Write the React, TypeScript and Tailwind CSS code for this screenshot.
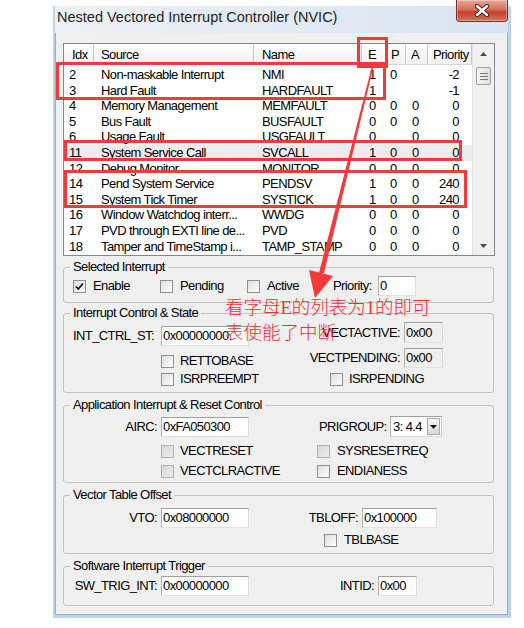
import React from "react";

type Row = [string, string, string, string, string, string, string];

const rows: Row[] = [
  ["2", "Non-maskable Interrupt", "NMI", "1", "0", "", "-2"],
  ["3", "Hard Fault", "HARDFAULT", "1", "", "", "-1"],
  ["4", "Memory Management", "MEMFAULT", "0", "0", "0", "0"],
  ["5", "Bus Fault", "BUSFAULT", "0", "0", "0", "0"],
  ["6", "Usage Fault", "USGFAULT", "0", "", "0", "0"],
  ["11", "System Service Call", "SVCALL", "1", "0", "0", "0"],
  ["12", "Debug Monitor", "MONITOR", "0", "0", "0", "0"],
  ["14", "Pend System Service", "PENDSV", "1", "0", "0", "240"],
  ["15", "System Tick Timer", "SYSTICK", "1", "0", "0", "240"],
  ["16", "Window Watchdog interr...", "WWDG", "0", "0", "0", "0"],
  ["17", "PVD through EXTI line de...", "PVD", "0", "0", "0", "0"],
  ["18", "Tamper and TimeStamp i...", "TAMP_STAMP", "0", "0", "0", "0"],
];

function Box({ checked, disabled }: { checked?: boolean; disabled?: boolean }) {
  return (
    <span
      className={
        disabled
          ? "flex h-[13px] w-[13px] shrink-0 items-center justify-center border border-[#b1b1b1] bg-[linear-gradient(135deg,#d9d9d9,#ebebeb)]"
          : "flex h-[13px] w-[13px] shrink-0 items-center justify-center border border-[#8e8f8f] bg-[linear-gradient(135deg,#dedede,#ffffff)]"
      }
    >
      {checked && (
        <svg width="11" height="11" viewBox="0 0 11 11">
          <path d="M2 5.5 L4.3 8 L9 2.5" fill="none" stroke="#111" strokeWidth="1.8" />
        </svg>
      )}
    </span>
  );
}

function Field({ value, cls, gray }: { value: string; cls: string; gray?: boolean }) {
  return (
    <div
      className={
        (gray
          ? "flex items-center border border-t-[#a0a0a0] border-l-[#b0b0b0] border-r-[#dcdcdc] border-b-[#e2e2e2] bg-[#f0f0f0] pl-[1px] "
          : "flex items-center border border-t-[#a0a0a0] border-l-[#b0b0b0] border-r-[#dcdcdc] border-b-[#e2e2e2] bg-white pl-[1px] ") + cls
      }
    >
      {value}
    </div>
  );
}

function Up() {
  return (
    <svg width="7" height="4" viewBox="0 0 7 4">
      <path d="M0 4 L3.5 0 L7 4 Z" fill="#4a4a4a" />
    </svg>
  );
}
function Down() {
  return (
    <svg width="7" height="4" viewBox="0 0 7 4">
      <path d="M0 0 L3.5 4 L7 0 Z" fill="#4a4a4a" />
    </svg>
  );
}

export default function App() {
  return (
    <div className="relative h-[628px] w-[524px] overflow-hidden bg-white font-['Liberation_Sans',Arial,sans-serif] text-[13px] tracking-[-0.6px] text-black">
      <div className="ml-[53px] pt-[6px]">
        <div className="flex h-[612px] w-[458px] flex-col border-b-[3px] border-l-2 border-r-[3px] border-[#bcd3ec] bg-[linear-gradient(90deg,#eef1f5,#d8e4f2)]">
          {/* title bar */}
          <div className="flex h-[27px] shrink-0 items-start justify-between">
            <span className="pl-[2px] pt-[3px] text-[14.5px] leading-[16px] tracking-normal text-[#1e1e1e]">
              Nested Vectored Interrupt Controller (NVIC)
            </span>
            <div className="-mt-[6px] flex h-[22px] w-[52px] items-center justify-center rounded-b-[4px] border border-t-0 border-[#7a2e25] bg-[linear-gradient(#e8a99c,#d66e5c_45%,#c4402c_58%,#d8705c)] shadow-[inset_0_0_0_1px_rgba(255,255,255,0.35)]">
              <svg width="16" height="13" viewBox="0 0 16 13">
                <path d="M3 2 L13 11 M13 2 L3 11" stroke="#5e1f18" strokeWidth="4.4" strokeLinecap="round" />
                <path d="M3 2 L13 11 M13 2 L3 11" stroke="#ffffff" strokeWidth="2.4" strokeLinecap="round" />
              </svg>
            </div>
          </div>

          {/* client */}
          <div className="flex flex-1 flex-col border-x border-b border-[#a3aab3] bg-[#f0f0f0]">
            {/* list view */}
            <div className="ml-[7px] mt-[10px] flex h-[213px] w-[432px] border border-[#828790] bg-white">
              <div className="flex w-[408px] flex-col">
                <div className="flex h-[21px] border-b border-[#d5d5d5] bg-[linear-gradient(#ffffff,#f0f0f0)] leading-[21px]">
                  <span className="w-[30px] border-r border-[#c8c8c8] pl-[8px]">Idx</span>
                  <span className="w-[160px] border-x border-l-white border-r-[#c8c8c8] pl-[6px]">Source</span>
                  <span className="w-[108px] border-x border-l-white border-r-[#c8c8c8] pl-[7px]">Name</span>
                  <span className="w-[24px] border-x border-l-white border-r-[#c8c8c8] pl-[5px]">E</span>
                  <span className="w-[20px] border-x border-l-white border-r-[#c8c8c8] pl-[4px]">P</span>
                  <span className="w-[22px] border-x border-l-white border-r-[#c8c8c8] pl-[4px]">A</span>
                  <span className="w-[44px] border-x border-l-white border-r-[#c8c8c8] pl-[4px]">Priority</span>
                </div>
                <div className="pt-[2px]">
                  {rows.map((r, i) => (
                    <div
                      key={r[0]}
                      className={
                        i === 5
                          ? "flex h-[15.6px] items-center whitespace-nowrap bg-[#ececec] leading-[15.6px]"
                          : "flex h-[15.6px] items-center whitespace-nowrap leading-[15.6px]"
                      }
                    >
                      <span className="w-[30px] pl-[5px]">{r[0]}</span>
                      <span className="w-[160px] overflow-hidden pl-[7px]">{r[1]}</span>
                      <span className="w-[108px] pl-[8px]">{r[2]}</span>
                      <span className="w-[24px] pl-[7px]">{r[3]}</span>
                      <span className="w-[20px] pl-[4px]">{r[4]}</span>
                      <span className="w-[22px] pl-[6px]">{r[5]}</span>
                      <span className="w-[44px] pr-[13px] text-right">{r[6]}</span>
                    </div>
                  ))}
                </div>
              </div>
              <div className="flex w-[22px] flex-col border-l border-[#e4e4e4] bg-[#f1f1f1]">
                <div className="flex h-[19px] items-center justify-center">
                  <Up />
                </div>
                <div className="mx-[3px] mt-[4px] flex h-[18px] flex-col items-center justify-center gap-[2px] rounded-[2px] border border-[#9c9c9c] bg-[linear-gradient(90deg,#f6f6f6,#dedede)]">
                  <span className="h-px w-[8px] bg-[#7a7a7a]" />
                  <span className="h-px w-[8px] bg-[#7a7a7a]" />
                  <span className="h-px w-[8px] bg-[#7a7a7a]" />
                </div>
                <div className="flex-1" />
                <div className="flex h-[19px] items-center justify-center">
                  <Down />
                </div>
              </div>
            </div>

            {/* Selected Interrupt */}
            <fieldset className="ml-[7px] mt-[4px] h-[43px] w-[431px] rounded-[3px] border border-[#c2c2c2] pl-[6px]">
              <legend className="px-[3px] leading-[14px]">Selected Interrupt</legend>
              <div className="flex h-[24px] items-center pl-[3px]">
                <div className="flex w-[87px] items-center gap-[7px]">
                  <Box checked />
                  <span>Enable</span>
                </div>
                <div className="flex w-[87px] items-center gap-[7px]">
                  <Box />
                  <span>Pending</span>
                </div>
                <div className="flex w-[86px] items-center gap-[7px]">
                  <Box />
                  <span>Active</span>
                </div>
                <span className="w-[45px]">Priority:</span>
                <Field value="0" cls="h-[20px] w-[38px]" />
              </div>
            </fieldset>

            {/* Interrupt Control & State */}
            <fieldset className="ml-[7px] mt-[3px] h-[87px] w-[431px] rounded-[3px] border border-[#c2c2c2] pl-[6px]">
              <legend className="px-[3px] leading-[14px]">Interrupt Control &amp; State</legend>
              <div className="flex pl-[3px]">
                <div className="flex w-[227px] flex-col">
                  <div className="mt-[6px] flex items-center gap-[4px]">
                    <span className="w-[84px] whitespace-nowrap">INT_CTRL_ST:</span>
                    <Field value="0x00000000" cls="h-[20px] w-[88px]" />
                  </div>
                  <div className="mt-[8px] flex h-[14px] items-center gap-[6px] pl-[88px]">
                    <Box />
                    <span>RETTOBASE</span>
                  </div>
                  <div className="mt-[4px] flex h-[14px] items-center gap-[6px] pl-[88px]">
                    <Box />
                    <span>ISRPREEMPT</span>
                  </div>
                </div>
                <div className="flex w-[143px] flex-col">
                  <div className="mt-[2px] flex items-center gap-[4px]">
                    <span className="w-[100px] whitespace-nowrap text-right">VECTACTIVE:</span>
                    <Field value="0x00" gray cls="h-[21px] w-[39px]" />
                  </div>
                  <div className="mt-[5px] flex items-center gap-[4px]">
                    <span className="w-[100px] whitespace-nowrap text-right">VECTPENDING:</span>
                    <Field value="0x00" gray cls="h-[20px] w-[39px]" />
                  </div>
                  <div className="mt-[4px] flex h-[14px] items-center gap-[6px] pl-[30px]">
                    <Box />
                    <span>ISRPENDING</span>
                  </div>
                </div>
              </div>
            </fieldset>

            {/* Application Interrupt & Reset Control */}
            <fieldset className="ml-[7px] mt-[5px] h-[85px] w-[431px] rounded-[3px] border border-[#c2c2c2] pl-[6px]">
              <legend className="px-[3px] leading-[14px]">Application Interrupt &amp; Reset Control</legend>
              <div className="flex pl-[3px]">
                <div className="flex w-[227px] flex-col">
                  <div className="mt-[5px] flex items-center gap-[4px]">
                    <span className="w-[84px] text-right">AIRC:</span>
                    <Field value="0xFA050300" cls="h-[20px] w-[88px]" />
                  </div>
                  <div className="mt-[7px] flex h-[14px] items-center gap-[6px] pl-[88px]">
                    <Box disabled />
                    <span>VECTRESET</span>
                  </div>
                  <div className="mt-[6px] flex h-[14px] items-center gap-[6px] pl-[88px]">
                    <Box disabled />
                    <span>VECTCLRACTIVE</span>
                  </div>
                </div>
                <div className="flex w-[160px] flex-col">
                  <div className="mt-[4px] flex items-center gap-[3px] pl-[19px]">
                    <span className="w-[68px] whitespace-nowrap">PRIGROUP:</span>
                    <div className="flex h-[21px] w-[52px] items-center border border-t-[#a0a0a0] border-l-[#b0b0b0] border-r-[#cfcfcf] border-b-[#d8d8d8] bg-white">
                      <span className="flex-1 whitespace-nowrap pl-[2px]">3: 4.4</span>
                      <span className="mr-px flex h-[17px] w-[13px] items-center justify-center border border-[#a9a9a9] bg-[linear-gradient(#f7f7f7,#dadada)]">
                        <svg width="7" height="4" viewBox="0 0 7 4">
                          <path d="M0 0 L3.5 4 L7 0 Z" fill="#111" />
                        </svg>
                      </span>
                    </div>
                  </div>
                  <div className="mt-[7px] flex h-[14px] items-center gap-[7px] pl-[17px]">
                    <Box disabled />
                    <span>SYSRESETREQ</span>
                  </div>
                  <div className="mt-[6px] flex h-[14px] items-center gap-[7px] pl-[17px]">
                    <Box />
                    <span>ENDIANESS</span>
                  </div>
                </div>
              </div>
            </fieldset>

            {/* Vector Table Offset */}
            <fieldset className="ml-[7px] mt-[5px] h-[66px] w-[431px] rounded-[3px] border border-[#c2c2c2] pl-[6px]">
              <legend className="px-[3px] leading-[14px]">Vector Table Offset</legend>
              <div className="flex pl-[3px]">
                <div className="flex w-[227px] flex-col">
                  <div className="mt-[6px] flex items-center gap-[4px]">
                    <span className="w-[84px] text-right">VTO:</span>
                    <Field value="0x08000000" cls="h-[20px] w-[88px]" />
                  </div>
                </div>
                <div className="flex w-[160px] flex-col">
                  <div className="mt-[6px] flex items-center gap-[4px]">
                    <span className="w-[58px] text-right">TBLOFF:</span>
                    <Field value="0x100000" cls="h-[20px] w-[75px]" />
                  </div>
                  <div className="mt-[5px] flex h-[14px] items-center gap-[7px] pl-[24px]">
                    <Box />
                    <span>TBLBASE</span>
                  </div>
                </div>
              </div>
            </fieldset>

            {/* Software Interrupt Trigger */}
            <fieldset className="ml-[7px] mt-[5px] h-[47px] w-[431px] rounded-[3px] border border-[#c2c2c2] pl-[6px]">
              <legend className="px-[3px] leading-[14px]">Software Interrupt Trigger</legend>
              <div className="flex pl-[3px]">
                <div className="flex w-[227px] flex-col">
                  <div className="mt-[3px] flex items-center gap-[4px]">
                    <span className="w-[84px] whitespace-nowrap text-right">SW_TRIG_INT:</span>
                    <Field value="0x00000000" cls="h-[20px] w-[88px]" />
                  </div>
                </div>
                <div className="flex w-[160px] flex-col">
                  <div className="mt-[3px] flex items-center gap-[4px]">
                    <span className="w-[74px] text-right">INTID:</span>
                    <Field value="0x00" cls="h-[20px] w-[39px]" />
                  </div>
                </div>
              </div>
            </fieldset>
          </div>
        </div>
      </div>

      {/* annotations */}
      <div className="pointer-events-none absolute left-[56px] top-[62px] h-[38px] w-[330px] border-[3px] border-[#f23a3a]" />
      <div className="pointer-events-none absolute left-[357px] top-[37px] h-[31px] w-[31px] border-[3px] border-[#f23a3a]" />
      <div className="pointer-events-none absolute left-[64px] top-[140px] h-[21px] w-[398px] border-[3px] border-[#f23a3a]" />
      <div className="pointer-events-none absolute left-[64px] top-[170px] h-[38px] w-[403px] border-[3px] border-[#f23a3a]" />
      <svg className="pointer-events-none absolute left-0 top-0" width="524" height="628" viewBox="0 0 524 628">
        <polygon points="372,66 373.6,66 324,273 319,273" fill="#f23a3a" />
        <polygon points="309,270 333,276 315,298" fill="#f23a3a" />
      </svg>
      <div className="pointer-events-none absolute left-[225px] top-[296px] whitespace-nowrap font-['Liberation_Serif','Noto_Sans_CJK_SC',serif] text-[18.5px] font-light leading-[25px] tracking-normal text-[#ff2a2a]">
        看字母E的列表为1的即可
        <br />
        表使能了中断
      </div>
    </div>
  );
}
